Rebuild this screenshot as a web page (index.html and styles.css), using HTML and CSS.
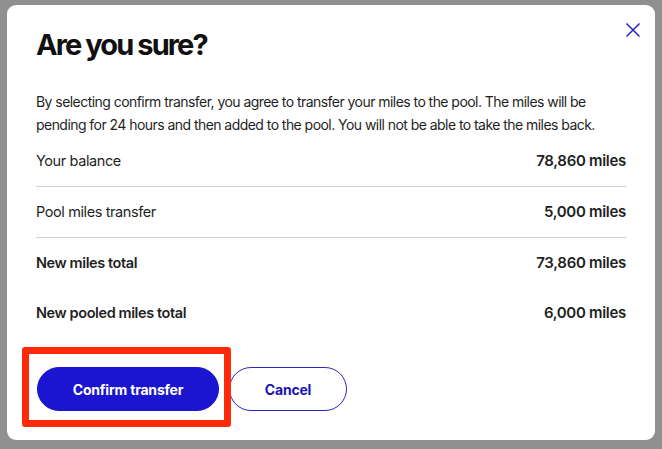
FILE: index.html
```html
<!DOCTYPE html>
<html lang="en">
<head>
<meta charset="utf-8">
<title>Are you sure?</title>
<link rel="stylesheet" href="styles.css">
</head>
<body>
<div class="backdrop">
  <div class="modal">
    <button class="close" aria-label="Close">
      <svg width="14" height="14" viewBox="0 0 14 14"><path d="M0.5 0.5 L13.5 13.5 M13.5 0.5 L0.5 13.5" stroke="#2424cc" stroke-width="1.5" fill="none"/></svg>
    </button>
    <h1 class="title">Are you sure?</h1>
    <p class="intro">By selecting confirm transfer, you agree to transfer your miles to the pool. The miles will be pending for 24 hours and then added to the pool. You will not be able to take the miles back.</p>
    <div class="rows">
      <div class="row divided"><span>Your balance</span><span class="val">78,860 miles</span></div>
      <div class="row divided"><span>Pool miles transfer</span><span class="val">5,000 miles</span></div>
      <div class="row strong"><span>New miles total</span><span class="val">73,860 miles</span></div>
      <div class="row strong"><span>New pooled miles total</span><span class="val">6,000 miles</span></div>
    </div>
    <div class="actions">
      <button class="btn primary">Confirm transfer</button>
      <button class="btn secondary">Cancel</button>
      <div class="highlight"></div>
    </div>
  </div>
</div>
</body>
</html>
```

FILE: styles.css
```css
html, body {
  margin: 0;
  padding: 0;
}
body {
  background: #909090;
  font-family: Inter, "Liberation Sans", sans-serif;
  color: #1a1a1a;
}
.backdrop {
  width: 662px;
  height: 449px;
  padding: 5px 0 0 7px;
  box-sizing: border-box;
}
.modal {
  position: relative;
  width: 648px;
  height: 435px;
  background: #fff;
  border-radius: 9px;
  padding: 22px 29px 0 29px;
  box-sizing: border-box;
}
.close {
  position: absolute;
  top: 18px;
  right: 15px;
  width: 14px;
  height: 14px;
  padding: 0;
  border: 0;
  background: none;
  display: flex;
}
.title {
  margin: 0;
  font-size: 29px;
  line-height: 36px;
  font-weight: 700;
  letter-spacing: -1.9px;
  color: #111;
}
.intro {
  margin: 27px 0 0 0;
  font-size: 14px;
  line-height: 23px;
  letter-spacing: -0.55px;
  color: #1f1f1f;
}
.row {
  display: flex;
  justify-content: space-between;
  align-items: center;
  padding: 14px 0;
  font-size: 14.5px;
  line-height: 22px;
  letter-spacing: -0.4px;
  color: #1f1f1f;
}
.row.divided {
  border-bottom: 1px solid #cfcfcf;
}
.row.strong {
  font-weight: 600;
}
.val {
  font-weight: 600;
  font-size: 15px;
  letter-spacing: -0.3px;
}
.actions {
  position: relative;
  display: flex;
  gap: 10px;
  margin-top: 29px;
  padding-left: 1px;
}
.btn {
  height: 44px;
  border-radius: 22px;
  font-family: Inter, "Liberation Sans", sans-serif;
  font-size: 14px;
  font-weight: 700;
  letter-spacing: -0.2px;
  cursor: pointer;
}
.primary {
  width: 182px;
  background: #1b15cf;
  border: 1px solid #1b15cf;
  color: #fff;
}
.secondary {
  width: 118px;
  background: #fff;
  border: 1px solid #2a24c4;
  color: #1b15b0;
}
.highlight {
  position: absolute;
  left: -14px;
  top: -20px;
  width: 209px;
  height: 80px;
  box-sizing: border-box;
  border: 7px solid #ff2a0a;
  border-radius: 3px;
  pointer-events: none;
}
```
